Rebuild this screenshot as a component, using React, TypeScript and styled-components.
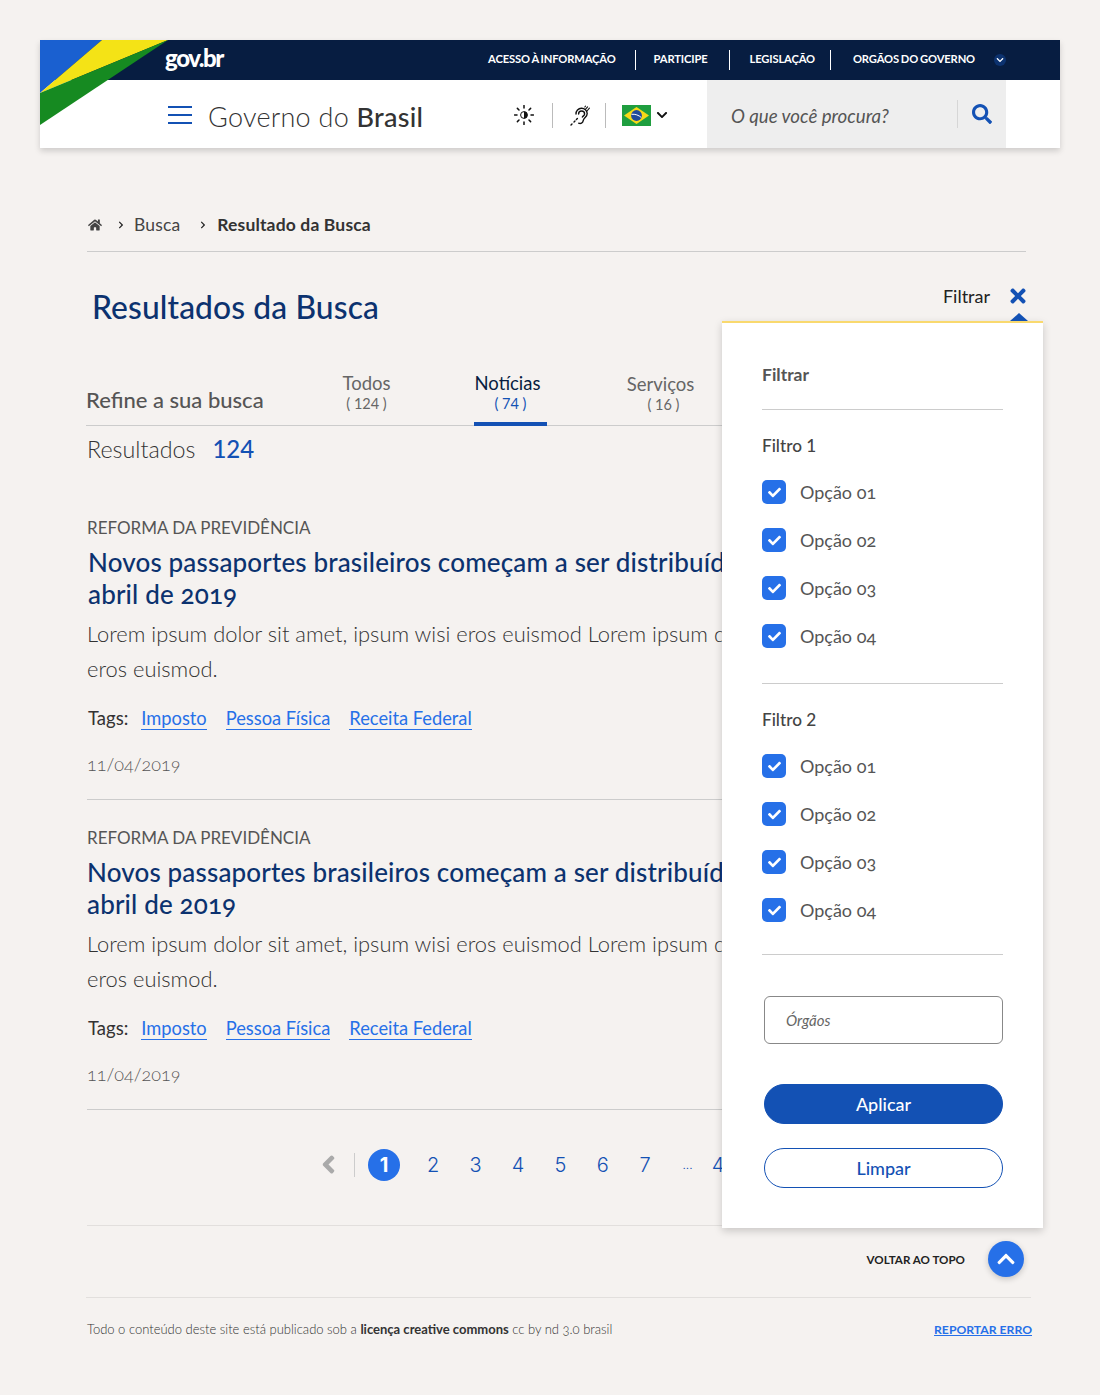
import styled, { createGlobalStyle } from "styled-components"
import { FaCheck, FaChevronDown, FaChevronLeft, FaChevronRight, FaChevronUp, FaHome, FaSearch, FaTimes } from "react-icons/fa"

const Global = createGlobalStyle`
  html, body {
    margin: 0;
    padding: 0;
    background: #f5f2f0;
    font-family: "Lato", "Open Sans", sans-serif;
    color: #333;
  }
  * { box-sizing: border-box; }
`

const Page = styled.div`
  position: relative;
  width: 1100px;
  height: 1395px;
  padding-top: 40px;
  overflow: hidden;
`

/* header */
const Header = styled.header`
  position: relative;
  width: 1020px;
  margin-left: 40px;
  background: #fff;
  box-shadow: 0 3px 6px rgba(0, 0, 0, 0.16);
`
const Corner = styled.svg`
  position: absolute;
  top: 0;
  left: 0;
`
const TopBar = styled.div`
  display: flex;
  align-items: center;
  height: 40px;
  padding: 0 54px 0 125px;
  background: #071d41;
  color: #fff;
`
const Logo = styled.span`
  font-size: 24px;
  font-weight: 900;
  letter-spacing: -1.4px;
  margin-top: -6px;
`
const TopNav = styled.nav`
  display: flex;
  align-items: center;
  margin-left: auto;
  font-size: 11.2px;
  font-weight: 700;
  letter-spacing: -0.15px;
  word-spacing: -0.6px;
`
const TopLink = styled.span<{ $left: number; $right: number }>`
  padding: 0 ${p => p.$right}px 3px ${p => p.$left}px;
`
const TopSep = styled.i`
  width: 1px;
  height: 20px;
  background: #fff;
`
const Round = styled.span`
  display: flex;
  align-items: center;
  justify-content: center;
  width: 12px;
  height: 12px;
  border-radius: 50%;
  background: #0c326f;
  font-size: 8px;
`
const MainBar = styled.div`
  display: flex;
  align-items: center;
  height: 68px;
  padding: 0 54px 0 128px;
`
const Burger = styled.span`
  position: relative;
  width: 24px;
  height: 18px;
  margin-top: 2px;
  border-top: 2px solid #1351b4;
  border-bottom: 2px solid #1351b4;
  &::after {
    content: "";
    position: absolute;
    left: 0;
    right: 0;
    top: 6px;
    height: 2px;
    background: #1351b4;
  }
`
const SiteName = styled.span`
  margin: 4px 0 0 16px;
  font-size: 27px;
  font-weight: 300;
  letter-spacing: 0.25px;
  b {
    font-weight: 500;
  }
`
const Tools = styled.div`
  display: flex;
  align-items: center;
  margin: 2px 0 0 auto;
  color: #111;
`
const ToolSep = styled.i<{ $left: number; $right: number }>`
  width: 1px;
  height: 25px;
  margin: 0 ${p => p.$right}px 0 ${p => p.$left}px;
  background: #bbb;
`
const FlagChevron = styled(FaChevronDown)`
  margin-left: 5px;
  font-size: 12px;
`
const SearchBox = styled.div`
  display: flex;
  align-items: center;
  width: 299px;
  height: 68px;
  margin-left: 39px;
  padding: 0 14px 0 24px;
  background: #eee;
  color: #555;
`
const SearchText = styled.span`
  margin-top: 3px;
  font-size: 18.7px;
  font-style: italic;
`
const SearchSep = styled.i`
  width: 1px;
  height: 28px;
  margin-left: auto;
  margin-right: 14px;
  background: #d6d6d6;
`
const SearchIcon = styled(FaSearch)`
  font-size: 20px;
  color: #1351b4;
`

/* conteudo */
const Main = styled.main`
  width: 939px;
  margin: 59px 0 0 87px;
`
const Crumbs = styled.div`
  display: flex;
  align-items: center;
  height: 45px;
  padding: 0 0 9px 1px;
  border-bottom: 1px solid #ccc;
  font-size: 17.5px;
  letter-spacing: 0.15px;
  color: #444;
  b {
    margin-left: 1px;
    font-weight: 700;
    font-size: 17.5px;
    color: #333;
  }
`
const CrumbArrow = styled(FaChevronRight)`
  font-size: 8px;
  margin: 0 9px 0 15px;
  color: #222;
`
const CrumbLink = styled.span`
  margin-right: 4px;
`
const TitleRow = styled.div`
  display: flex;
  justify-content: space-between;
  height: 118px;
  padding: 34px 0 0 5px;
`
const PageTitle = styled.h1`
  margin: 0;
  font-size: 31.8px;
  line-height: 42px;
  font-weight: 500;
  letter-spacing: 0.1px;
  color: #0c326f;
`
const FilterToggle = styled.div`
  display: flex;
  align-items: center;
  height: 20px;
  font-size: 18px;
  color: #222;
`
const ToggleX = styled(FaTimes)`
  margin: 0 -3px 0 17px;
  font-size: 22px;
  color: #1351b4;
`
const TabsRow = styled.div`
  display: flex;
  align-items: flex-end;
  height: 56px;
  margin-left: -1px;
  border-bottom: 1px solid #ccc;
`
const Refine = styled.div`
  width: 244px;
  padding-bottom: 12px;
  font-size: 22px;
  font-weight: 500;
  color: #555;
`
const Tab = styled.div<{ $active?: boolean; $lower?: boolean }>`
  width: 73px;
  height: 57px;
  margin-right: ${p => (p.$active ? 77 : 71)}px;
  margin-bottom: -1px;
  padding-top: ${p => (p.$lower ? 4 : 3)}px;
  text-align: center;
  font-size: 18.5px;
  line-height: 23px;
  white-space: nowrap;
  color: ${p => (p.$active ? "#071d41" : "#666")};
  border-bottom: 4px solid ${p => (p.$active ? "#1351b4" : "transparent")};
  span {
    display: block;
    margin-top: 2px;
    padding-left: ${p => (p.$lower ? 6 : 0)}px;
    font-size: 14.5px;
    line-height: 14px;
    color: ${p => (p.$active ? "#1351b4" : "#666")};
  }
`
const ActiveLabel = styled.div`
  margin-right: 6px;
`
const Count = styled.div`
  display: flex;
  align-items: baseline;
  gap: 17px;
  height: 64px;
  padding-top: 8px;
  font-size: 23.3px;
  font-weight: 300;
  color: #333;
  strong {
    font-size: 24px;
    font-weight: 500;
    color: #1351b4;
  }
`
const Article = styled.article`
  height: 310px;
  padding-top: 27px;
  border-bottom: 1px solid #ccc;
`
const Category = styled.div`
  font-size: 17px;
  line-height: 22px;
  color: #555;
`
const ArticleTitle = styled.h2<{ $indent?: boolean }>`
  margin: 7px 0 0 ${p => (p.$indent ? 1 : 0)}px;
  font-size: 26px;
  line-height: 32px;
  font-weight: 500;
  letter-spacing: 0.15px;
  color: #0c326f;
  font-variant-numeric: oldstyle-nums;
`
const Summary = styled.p`
  margin: 6px 0 0;
  font-size: 21.9px;
  line-height: 35px;
  font-weight: 300;
  color: #333;
  white-space: nowrap;
`
const Tags = styled.div`
  display: flex;
  align-items: baseline;
  gap: 19px;
  margin: 20px 0 0 1px;
  font-size: 18.3px;
  line-height: 24px;
  color: #333;
`
const TagsLabel = styled.span`
  margin-right: -6px;
  font-size: 18.5px;
`
const TagLink = styled.a`
  color: #2670e8;
  border-bottom: 1px solid #2670e8;
  line-height: 21px;
`
const Published = styled.div`
  margin-top: 23px;
  font-size: 18px;
  font-weight: 300;
  color: #555;
  font-variant-numeric: oldstyle-nums;
`
const Pagination = styled.div`
  display: flex;
  align-items: center;
  height: 116px;
  padding: 0 0 6px 232px;
  border-bottom: 1px solid #e2dfdd;
  font-family: "Inter", sans-serif;
  font-size: 20px;
  font-weight: 300;
  color: #1351b4;
`
const PrevIcon = styled(FaChevronLeft)`
  font-size: 19px;
  color: #aaa;
  stroke: #aaa;
  stroke-width: 45;
`
const PageSep = styled.i`
  width: 1px;
  height: 24px;
  margin: 0 13px 0 16px;
  background: #ccc;
`
const Current = styled.span`
  display: flex;
  align-items: center;
  justify-content: center;
  width: 32px;
  height: 32px;
  margin-right: 12px;
  border-radius: 50%;
  background: #2670e8;
  color: #fff;
  font-weight: 700;
`
const PageNum = styled.span<{ $small?: boolean }>`
  width: 42.4px;
  margin-right: ${p => (p.$small ? -12 : 0)}px;
  text-align: center;
  font-size: ${p => (p.$small ? 12 : 20)}px;
`
const TopRow = styled.div`
  display: flex;
  align-items: center;
  justify-content: flex-end;
  width: 945px;
  height: 72px;
  padding: 0 7px 5px 0;
  margin-left: -1px;
  border-bottom: 1px solid #e2dfdd;
  font-size: 11.6px;
  font-weight: 700;
  color: #222;
`
const TopButton = styled.span`
  display: flex;
  align-items: center;
  justify-content: center;
  width: 36px;
  height: 36px;
  margin-left: 23px;
  border-radius: 50%;
  background: #2670e8;
  box-shadow: 0 2px 6px rgba(0, 0, 0, 0.2);
  color: #fff;
  font-size: 20px;
`
const Footer = styled.footer`
  display: flex;
  align-items: center;
  justify-content: space-between;
  width: 945px;
  height: 62px;
  font-size: 13px;
  font-weight: 300;
  color: #333;
  font-variant-numeric: oldstyle-nums;
  b {
    font-weight: 700;
  }
`
const Report = styled.a`
  font-size: 12.2px;
  font-weight: 700;
  color: #2670e8;
  text-decoration: underline;
`

/* painel de filtro */
const Panel = styled.aside`
  position: absolute;
  top: 321px;
  left: 722px;
  width: 321px;
  height: 907px;
  padding: 0 40px;
  background: #fff;
  border-top: 2px solid #f9d96e;
  box-shadow: 0 3px 8px rgba(0, 0, 0, 0.18);
  &::before {
    content: "";
    position: absolute;
    top: -10px;
    left: 288px;
    border-left: 9px solid transparent;
    border-right: 9px solid transparent;
    border-bottom: 8px solid #1351b4;
  }
`
const PanelHead = styled.div`
  height: 87px;
  padding-top: 41px;
  border-bottom: 1px solid #ccc;
  font-size: 17.5px;
  font-weight: 700;
  color: #555;
`
const Group = styled.div`
  height: 274px;
  padding-top: 24px;
  border-bottom: 1px solid #ccc;
  & + & {
    height: 271px;
  }
`
const GroupTitle = styled.div`
  margin-bottom: 11px;
  font-size: 17.2px;
  line-height: 24px;
  font-weight: 500;
  color: #444;
`
const Option = styled.label`
  display: flex;
  align-items: center;
  gap: 14px;
  height: 48px;
  padding-bottom: 2px;
  font-size: 18px;
  color: #555;
  font-variant-numeric: oldstyle-nums;
`
const Check = styled.span`
  display: flex;
  align-items: center;
  justify-content: center;
  width: 24px;
  height: 24px;
  border-radius: 5px;
  background: #2670e8;
  color: #fff;
  font-size: 13px;
`
const Field = styled.div`
  display: flex;
  align-items: center;
  width: 239px;
  height: 48px;
  margin: 41px 0 40px 2px;
  padding-left: 21px;
  border: 1px solid #888;
  border-radius: 6px;
  font-size: 15px;
  font-style: italic;
  color: #666;
`
const Button = styled.button<{ $primary?: boolean }>`
  display: block;
  width: 239px;
  height: 40px;
  margin: 0 0 24px 2px;
  border: 1px solid #1351b4;
  border-radius: 20px;
  background: ${p => (p.$primary ? "#1351b4" : "#fff")};
  color: ${p => (p.$primary ? "#fff" : "#1351b4")};
  font-family: inherit;
  font-size: 18px;
  font-weight: 500;
`

const SunIcon = () => (
  <svg width="20" height="20" viewBox="0 0 20 20" fill="#111">
    <circle cx="10" cy="10" r="3.4" fill="#fff" stroke="#111" strokeWidth="1" />
    <path d="M10 6.6a3.4 3.4 0 0 1 0 6.8z" />
    <path
      d="M10 .5v2.5M10 17v2.5M.5 10H3M17 10h2.5M3.4 3.4 5 5M15 15l1.6 1.6M3.4 16.6 5 15M15 5l1.6-1.6"
      stroke="#111"
      strokeWidth="1.5"
      strokeLinecap="round"
    />
  </svg>
)

const EarIcon = () => (
  <svg width="21" height="21" viewBox="0 0 21 21" fill="none" stroke="#111" strokeLinecap="round">
    <path d="M6 9a5.6 5.6 0 0 1 11.2-.4c0 3.6-3.4 4-3.9 6.8-.5 2.8-2.7 3.7-4.6 2.8" strokeWidth="1.4" />
    <path d="M8.6 9a3 3 0 0 1 6 0c0 1.6-1.6 1.8-2.2 3" strokeWidth="1.4" />
    <path d="M1 20l1-1M4 17l1-1M6.4 14.6l1-1" strokeWidth="1.4" />
    <path d="M15.5 1.2 14.8 2M17.6 1.8l-2 2.4M19.4 3.2l-2.4 2.8" strokeWidth="1.1" />
  </svg>
)

const FlagIcon = () => (
  <svg width="29" height="21" viewBox="0 0 29 21">
    <rect width="29" height="21" fill="#1f9e3f" />
    <path d="M14.5 2 27 10.5 14.5 19 2 10.5z" fill="#f7d917" />
    <circle cx="14.5" cy="10.5" r="5.4" fill="#1f4a9a" />
    <path d="M9.5 9.3c3.6-.4 7.2.8 9.8 3.2" stroke="#fff" strokeWidth="1" fill="none" />
  </svg>
)

const options = ["Opção 01", "Opção 02", "Opção 03", "Opção 04"]
const pages = ["2", "3", "4", "5", "6", "7"]

const FilterGroup = ({ title }: { title: string }) => (
  <Group>
    <GroupTitle>{title}</GroupTitle>
    {options.map(option => (
      <Option key={option}>
        <Check>
          <FaCheck />
        </Check>
        {option}
      </Option>
    ))}
  </Group>
)

const NewsItem = ({ indent }: { indent?: boolean }) => (
  <Article>
    <Category>REFORMA DA PREVIDÊNCIA</Category>
    <ArticleTitle $indent={indent}>
      Novos passaportes brasileiros começam a ser distribuídos
      <br />
      abril de 2019
    </ArticleTitle>
    <Summary>
      Lorem ipsum dolor sit amet, ipsum wisi eros euismod Lorem ipsum dolor
      <br />
      eros euismod.
    </Summary>
    <Tags>
      <TagsLabel>Tags:</TagsLabel>
      <TagLink>Imposto</TagLink>
      <TagLink>Pessoa Física</TagLink>
      <TagLink>Receita Federal</TagLink>
    </Tags>
    <Published>11/04/2019</Published>
  </Article>
)

export default function App() {
  return (
    <Page>
      <Global />
      <Header>
        <TopBar>
          <Logo>gov.br</Logo>
          <TopNav>
            <TopLink $left={0} $right={19}>ACESSO À INFORMAÇÃO</TopLink>
            <TopSep />
            <TopLink $left={18} $right={22}>PARTICIPE</TopLink>
            <TopSep />
            <TopLink $left={19} $right={15}>LEGISLAÇÃO</TopLink>
            <TopSep />
            <TopLink $left={22} $right={19}>ORGÃOS DO GOVERNO</TopLink>
            <Round>
              <FaChevronDown />
            </Round>
          </TopNav>
        </TopBar>
        <MainBar>
          <Burger />
          <SiteName>
            Governo do <b>Brasil</b>
          </SiteName>
          <Tools>
            <SunIcon />
            <ToolSep $left={18} $right={17} />
            <EarIcon />
            <ToolSep $left={14} $right={16} />
            <FlagIcon />
            <FlagChevron />
          </Tools>
          <SearchBox>
            <SearchText>O que você procura?</SearchText>
            <SearchSep />
            <SearchIcon />
          </SearchBox>
        </MainBar>
        <Corner width="128" height="85" viewBox="0 0 128 85">
          <path d="M0 0H62L0 53z" fill="#1a60d0" />
          <path d="M62 0H128L0 53z" fill="#f4e316" />
          <path d="M128 0 0 85V53z" fill="#168a21" />
        </Corner>
      </Header>

      <Main>
        <Crumbs>
          <FaHome size={14} />
          <CrumbArrow />
          <CrumbLink>Busca</CrumbLink>
          <CrumbArrow />
          <b>Resultado da Busca</b>
        </Crumbs>
        <TitleRow>
          <PageTitle>Resultados da Busca</PageTitle>
          <FilterToggle>
            Filtrar
            <ToggleX />
          </FilterToggle>
        </TitleRow>
        <TabsRow>
          <Refine>Refine a sua busca</Refine>
          <Tab>
            Todos
            <span>( 124 )</span>
          </Tab>
          <Tab $active>
            <ActiveLabel>Notícias</ActiveLabel>
            <span>( 74 )</span>
          </Tab>
          <Tab $lower>
            Serviços
            <span>( 16 )</span>
          </Tab>
        </TabsRow>
        <Count>
          Resultados <strong>124</strong>
        </Count>
        <NewsItem indent />
        <NewsItem />
        <Pagination>
          <PrevIcon />
          <PageSep />
          <Current>1</Current>
          {pages.map(page => (
            <PageNum key={page}>{page}</PageNum>
          ))}
          <PageNum $small>...</PageNum>
          <PageNum>4</PageNum>
        </Pagination>
        <TopRow>
          VOLTAR AO TOPO
          <TopButton>
            <FaChevronUp />
          </TopButton>
        </TopRow>
        <Footer>
          <span>
            Todo o conteúdo deste site está publicado sob a <b>licença creative commons</b> cc by nd 3.0 brasil
          </span>
          <Report>REPORTAR ERRO</Report>
        </Footer>
      </Main>

      <Panel>
        <PanelHead>Filtrar</PanelHead>
        <FilterGroup title="Filtro 1" />
        <FilterGroup title="Filtro 2" />
        <Field>Órgãos</Field>
        <Button $primary>Aplicar</Button>
        <Button>Limpar</Button>
      </Panel>
    </Page>
  )
}
